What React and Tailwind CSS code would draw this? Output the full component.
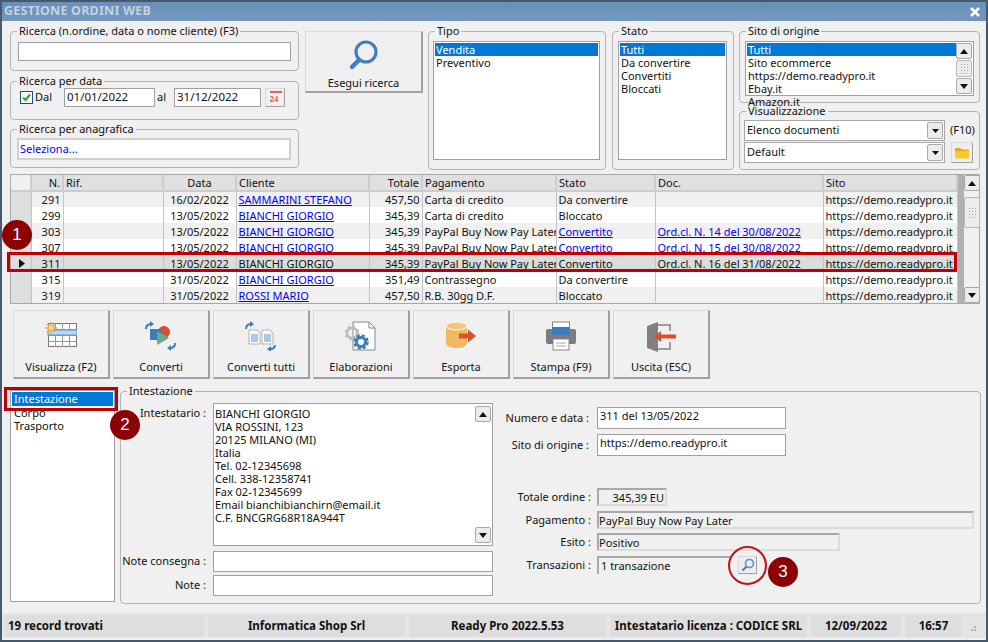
const rows = [
  ['291', '16/02/2022', 'SAMMARINI STEFANO', '457,50', 'Carta di credito', 'Da convertire', false, '', 'bg-[#f0f0f0]'],
  ['299', '13/05/2022', 'BIANCHI GIORGIO', '345,39', 'Carta di credito', 'Bloccato', false, '', 'bg-white'],
  ['303', '13/05/2022', 'BIANCHI GIORGIO', '345,39', 'PayPal Buy Now Pay Later', 'Convertito', true, 'Ord.cl. N. 14 del 30/08/2022', 'bg-[#f0f0f0]'],
  ['307', '13/05/2022', 'BIANCHI GIORGIO', '345,39', 'PayPal Buy Now Pay Later', 'Convertito', true, 'Ord.cl. N. 15 del 30/08/2022', 'bg-white'],
  ['311', '13/05/2022', 'BIANCHI GIORGIO', '345,39', 'PayPal Buy Now Pay Later', 'Convertito', true, 'Ord.cl. N. 16 del 31/08/2022', 'bg-[#dcdcdc]'],
  ['315', '31/05/2022', 'BIANCHI GIORGIO', '351,49', 'Contrassegno', 'Da convertire', false, '', 'bg-white'],
  ['319', '31/05/2022', 'ROSSI MARIO', '457,50', 'R.B. 30gg D.F.', 'Bloccato', false, '', 'bg-[#f0f0f0]'],
];

function Box({ title, className, children }) {
  return (
    <fieldset className={`border border-[#b4b4b4] rounded-[4px] min-w-0 ${className}`}>
      <legend className="ml-[6px] px-[2px] h-[14px] leading-[14px]">{title}</legend>
      {children}
    </fieldset>
  );
}

function Arrow({ down }) {
  return (
    <div className="w-[16px] h-[16px] shrink-0 flex items-center justify-center bg-[#ececec] border border-[#a8a8a8] rounded-[2px]">
      <svg width="8" height="5" viewBox="0 0 8 5">
        <path d={down ? 'M0 0H8L4 5Z' : 'M0 5H8L4 0Z'} fill="#111" />
      </svg>
    </div>
  );
}

function Thumb({ className }) {
  return (
    <div className={`w-[16px] shrink-0 flex items-center justify-center bg-[#ececec] border border-[#b8b8b8] rounded-[2px] ${className}`}>
      <div className="grid grid-cols-3 gap-[2px]">
        {Array.from({ length: 12 }).map((_, i) => (
          <div key={i} className="w-[1px] h-[1px] bg-[#a8a8a8]" />
        ))}
      </div>
    </div>
  );
}

function Inset({ className, children }) {
  return (
    <div className={`h-[18px] leading-[16px] pl-[2px] bg-[#f0f0f0] border-2 border-[#dcdcdc] border-t-[#a8a8a8] border-l-[#a8a8a8] ${className}`}>
      {children}
    </div>
  );
}

function Select({ text, w }) {
  return (
    <div className={`h-[21px] bg-white border border-[#a8a8a8] flex items-center justify-between pl-[2px] pr-[1px] ${w}`}>
      <span>{text}</span>
      <div className="w-[16px] h-[17px] bg-[#ececec] border border-[#a8a8a8] rounded-[2px] flex items-center justify-center">
        <svg width="7" height="4" viewBox="0 0 7 4"><path d="M0 0H7L3.5 4Z" fill="#111" /></svg>
      </div>
    </div>
  );
}

function ToolBtn({ label, children }) {
  return (
    <div className="w-[97px] h-[69px] flex flex-col items-center bg-[#f0f0f0] border border-[#dadada] border-r-2 border-b-2 border-r-[#a0a0a0] border-b-[#a0a0a0]">
      <div className="h-[43px] pt-[10px] flex items-start justify-center">{children}</div>
      <div className="mt-[6px] leading-[14px]">{label}</div>
    </div>
  );
}

function Badge({ n, className }) {
  return (
    <div className={`absolute w-[30px] h-[30px] rounded-full bg-[#8b0000] text-white flex items-center justify-center text-[17px] font-['Liberation_Sans',sans-serif] ${className}`}>
      {n}
    </div>
  );
}

function Status({ w, left, children }) {
  return (
    <div className={`h-[24px] bg-[#dedede] border border-[#e8e8e8] font-bold text-[11.5px] flex items-center ${left ? 'pl-[3px]' : 'justify-center'} ${w}`}>
      {children}
    </div>
  );
}

const IconTable = () => (
  <svg width="32" height="28" viewBox="0 0 32 28">
    <rect x="3.5" y="2.5" width="28" height="23" fill="#fff" stroke="#777" />
    <path d="M3 8.5H32M3 14.5H32M3 20.5H32M10.5 2V26M17.5 2V26M24.5 2V26" stroke="#999" />
    <rect x="3" y="9" width="29" height="5" fill="#bcd6ec" stroke="#5a9ad0" />
    <g stroke="#f0a94a" strokeWidth="1.4">
      <path d="M6 1V13M0 7H12M2 3L10 11M10 3L2 11" />
    </g>
    <circle cx="6" cy="7" r="3" fill="#f8d8a0" stroke="#eea040" />
  </svg>
);

const Curl = ({ d }) => <path d={d} fill="none" stroke="#3c7dbd" strokeWidth="2" />;

const IconConverti = () => (
  <svg width="34" height="30" viewBox="0 0 34 30">
    <Curl d="M2 8C2 4 4 3 7 3" />
    <path d="M6 0L10 3L6 6Z" fill="#3c7dbd" />
    <circle cx="20" cy="11" r="6" fill="#d94f2b" />
    <rect x="6" y="8" width="11" height="11" fill="#3c7dbd" />
    <path d="M13 10L25 17L13 24Z" fill="#5fae8a" />
    <Curl d="M31 22C31 26 29 27 26 27" />
    <path d="M27 24L23 27L27 30Z" fill="#3c7dbd" />
  </svg>
);

const Doc = ({ x }) => (
  <g>
    <path d={`M${x} 9H${x + 8}L${x + 11} 12V23H${x}Z`} fill="#fff" stroke="#b0b0b0" />
    <rect x={x + 2} y="13" width="7" height="8" fill="#a8cbe8" />
  </g>
);

const IconTutti = () => (
  <svg width="34" height="30" viewBox="0 0 34 30">
    <Curl d="M2 8C2 4 4 3 7 3" />
    <path d="M6 0L10 3L6 6Z" fill="#3c7dbd" />
    <Doc x={5} />
    <Doc x={18} />
    <Curl d="M31 24C31 27 29 28 26 28" />
    <path d="M27 25L23 28L27 31Z" fill="#3c7dbd" />
  </svg>
);

const IconElab = () => (
  <svg width="32" height="30" viewBox="0 0 32 30">
    <path d="M8 1H24L30 7V29H8Z" fill="#fff" stroke="#888" />
    <path d="M24 1V7H30" fill="none" stroke="#888" />
    <circle cx="7" cy="12" r="5" fill="none" stroke="#bbb" strokeWidth="2.5" />
    <circle cx="7" cy="12" r="6.5" fill="none" stroke="#bbb" strokeWidth="2" strokeDasharray="2.5 2.6" />
    <circle cx="16" cy="21" r="4.5" fill="none" stroke="#3c7dbd" strokeWidth="3" />
    <circle cx="16" cy="21" r="6.5" fill="none" stroke="#3c7dbd" strokeWidth="2.5" strokeDasharray="3 2.1" />
  </svg>
);

const IconEsporta = () => (
  <svg width="32" height="28" viewBox="0 0 32 28">
    <path d="M1 5V22C1 25 6 27 11.5 27S22 25 22 22V5Z" fill="#f0b860" />
    <ellipse cx="11.5" cy="5" rx="10.5" ry="4" fill="#f4c67e" stroke="#fff" />
    <path d="M14 12.5H23V8.5L31 15L23 21.5V17.5H14Z" fill="#d9502e" />
  </svg>
);

const IconStampa = () => (
  <svg width="32" height="30" viewBox="0 0 32 30">
    <rect x="7.5" y="1" width="17" height="7" fill="#fff" stroke="#888" />
    <rect x="1" y="8" width="30" height="15" rx="2" fill="#7d7d7d" />
    <rect x="7" y="6" width="18" height="8" fill="#3c7dbd" />
    <rect x="8" y="18" width="16" height="11" fill="#fff" stroke="#888" />
    <path d="M11 22H21M11 25H21" stroke="#aaa" />
  </svg>
);

const IconUscita = () => (
  <svg width="30" height="32" viewBox="0 0 30 32">
    <path d="M1 5L12 1V31L1 27Z" fill="#808080" />
    <path d="M12 4H24V10M24 21V28H12" fill="none" stroke="#808080" strokeWidth="1.5" />
    <path d="M29 13.5H14V10L7 15.5L14 21V17.5H29Z" fill="#d9502e" transform="translate(1 0)" />
  </svg>
);

export default function App() {
  return (
    <div className="relative w-[988px] h-[642px] overflow-hidden bg-[#f0f0f0] border-2 border-t-0 border-[#47596d] text-[11px] text-[#111] font-['Noto_Sans','Open_Sans',sans-serif] flex flex-col">
      {/* Title */}
      <div className="h-[21px] shrink-0 border-t-2 border-[#47596d] bg-gradient-to-b from-[#6b90b8] to-[#7398bf] flex items-center justify-between pl-[2px] pr-[6px]">
        <span className="font-bold text-[12.5px] text-[#c3d2e2] tracking-[0.2px]">GESTIONE ORDINI WEB</span>
        <svg width="10" height="10" viewBox="0 0 10 10"><path d="M1 1L9 9M9 1L1 9" stroke="#fff" strokeWidth="2.6" /></svg>
      </div>

      {/* Filters */}
      <div className="flex h-[146px] shrink-0 mt-[3px] pl-[8px]">
        <div className="w-[289px] flex flex-col">
          <Box title="Ricerca (n.ordine, data o nome cliente) (F3)" className="h-[47px]">
            <div className="h-[19px] mt-[4px] ml-[7px] w-[273px] bg-white border border-[#a0a0a0]" />
          </Box>
          <Box title="Ricerca per data" className="h-[46px] mt-[3px]">
            <div className="flex items-center h-[20px] mt-[-1px] ml-[9px]">
              <div className="w-[13px] h-[13px] border border-[#1f4f7f] bg-white flex items-center justify-center">
                <svg width="9" height="9" viewBox="0 0 9 9"><path d="M1 4.5L3.5 7L8 1.5" fill="none" stroke="#2f9e2f" strokeWidth="2" /></svg>
              </div>
              <span className="ml-[2px] w-[29px]">Dal</span>
              <div className="w-[91px] h-[19px] bg-white border border-[#a0a0a0] pl-[2px] leading-[16px] text-[11.5px]">01/01/2022</div>
              <span className="w-[19px] pl-[2px]">al</span>
              <div className="w-[87px] h-[19px] bg-white border border-[#a0a0a0] pl-[2px] leading-[16px] text-[11.5px]">31/12/2022</div>
              <div className="ml-[4px] w-[20px] h-[19px] bg-[#eeeeee] border border-[#dadada] border-r-[#a0a0a0] border-b-[#a0a0a0] flex items-center justify-center">
                <svg width="16" height="14" viewBox="0 0 16 14">
                  <rect x="1" y="1" width="14" height="12" fill="#fdf4f2" />
                  <path d="M3 1H15V3H3Z" fill="#d9675a" />
                  <text x="2.5" y="12" fontSize="8" fontWeight="700" fill="#e07060">24</text>
                </svg>
              </div>
            </div>
          </Box>
          <Box title="Ricerca per anagrafica" className="h-[46px] mt-[2px]">
            <div className="h-[22px] mt-[2px] ml-[6px] w-[274px] bg-white border-2 border-[#d0d0d0] pl-[1px] leading-[17px] text-[#0000ff]">Seleziona...</div>
          </Box>
        </div>

        <div className="ml-[6px] mt-[7px] w-[118px] h-[62px] flex flex-col items-center bg-[#f0f0f0] border border-[#dadada] border-b-2 border-r-2 border-b-[#a0a0a0] border-r-[#a0a0a0]">
          <svg className="mt-[7px]" width="32" height="32" viewBox="0 0 32 32">
            <circle cx="18" cy="13" r="10" fill="none" stroke="#3f7fbf" strokeWidth="3.2" />
            <path d="M11 21L4 28" stroke="#3f7fbf" strokeWidth="4.5" strokeLinecap="round" />
          </svg>
          <span className="mt-[5px] leading-[14px]">Esegui ricerca</span>
        </div>

        <Box title="Tipo" className="ml-[5px] w-[178px] h-[146px]">
          <div className="mt-[3px] ml-[4px] w-[167px] h-[119px] bg-white border border-[#a0a0a0] p-[1px] leading-[13px]">
            <div className="bg-[#0078d7] text-white h-[13px] pl-[1px]">Vendita</div>
            <div className="pl-[1px]">Preventivo</div>
          </div>
        </Box>

        <Box title="Stato" className="ml-[6px] w-[122px] h-[146px]">
          <div className="mt-[3px] ml-[5px] w-[109px] h-[119px] bg-white border border-[#a0a0a0] p-[1px] leading-[13px]">
            <div className="bg-[#0078d7] text-white h-[13px] pl-[1px]">Tutti</div>
            <div className="pl-[1px]">Da convertire</div>
            <div className="pl-[1px]">Convertiti</div>
            <div className="pl-[1px]">Bloccati</div>
          </div>
        </Box>

        <div className="ml-[5px] w-[241px] flex flex-col">
          <Box title="Sito di origine" className="h-[79px]">
            <div className="mt-[3px] ml-[5px] w-[229px] h-[55px] bg-white border border-[#a0a0a0] flex leading-[13px] p-[1px]">
              <div className="flex-1 min-w-0">
                <div className="bg-[#0078d7] text-white h-[13px] pl-[1px]">Tutti</div>
                <div className="pl-[1px]">Sito ecommerce https://demo.readypro.it</div>
                <div className="pl-[1px]">Ebay.it</div>
                <div className="pl-[1px]">Amazon.it</div>
              </div>
              <div className="flex flex-col justify-between h-[51px] mr-0">
                <Arrow />
                <Thumb className="h-[17px]" />
                <Arrow down />
              </div>
            </div>
          </Box>
          <Box title="Visualizzazione" className="h-[66px] mt-[1px]">
            <div className="flex items-center mt-[2px] ml-[4px]">
              <Select text="Elenco documenti" w="w-[201px]" />
              <span className="ml-[5px]">(F10)</span>
            </div>
            <div className="flex items-center mt-[1px] ml-[4px]">
              <Select text="Default" w="w-[201px]" />
              <div className="ml-[6px] w-[22px] h-[21px] bg-[#eeeeee] border border-[#dadada] border-r-[#a0a0a0] border-b-[#a0a0a0] flex items-center justify-center">
                <svg width="16" height="13" viewBox="0 0 16 13">
                  <path d="M1 2H6L8 3.5H15V11.5H1Z" fill="#e9a818" />
                  <path d="M1 5H15V11.5Q15 12.5 14 12.5H2Q1 12.5 1 11.5Z" fill="#fbc92d" />
                </svg>
              </div>
            </div>
          </Box>
        </div>
      </div>

      {/* Grid */}
      <div className="flex h-[130px] w-[970px] shrink-0 ml-[8px] mt-[4px] border border-[#a8a8a8]">
        <table className="table-fixed border-collapse w-[946px] h-[128px] leading-[15px]">
          <colgroup>
            <col className="w-[20px]" /><col className="w-[32px]" /><col className="w-[100px]" /><col className="w-[73px]" />
            <col className="w-[133px]" /><col className="w-[53px]" /><col className="w-[134px]" /><col className="w-[99px]" />
            <col className="w-[168px]" /><col className="w-[134px]" />
          </colgroup>
          <thead>
            <tr className="h-[16px] bg-[#e0e0e0] [&>th]:font-normal [&>th]:border-r-2 [&>th]:border-b-2 [&>th]:border-[#cdcdcd] [&>th]:px-[2px] [&>th]:overflow-hidden [&>th]:whitespace-nowrap">
              <th className="bg-[#f0f0f0]" />
              <th className="text-right">N.</th>
              <th className="text-left">Rif.</th>
              <th className="text-center">Data</th>
              <th className="text-left">Cliente</th>
              <th className="text-right">Totale</th>
              <th className="text-left">Pagamento</th>
              <th className="text-left">Stato</th>
              <th className="text-left">Doc.</th>
              <th className="text-left">Sito</th>
            </tr>
          </thead>
          <tbody>
            {rows.map((r) => {
              const sel = r[0] === '311';
              const link = sel ? 'underline text-[#111]' : 'underline text-[#0000ff]';
              return (
                <tr key={r[0]} className={`h-[16px] ${r[8]} [&>td]:border-r [&>td]:border-[#c4c4c4] [&>td]:px-[2px] [&>td]:p-y-0 [&>td]:overflow-hidden [&>td]:whitespace-nowrap`}>
                  <td className="bg-[#dedede]">
                    {sel && (
                      <svg className="ml-[6px]" width="6" height="9" viewBox="0 0 6 9"><path d="M0 0L6 4.5L0 9Z" fill="#111" /></svg>
                    )}
                  </td>
                  <td className="text-right">{r[0]}</td>
                  <td />
                  <td className="text-center">{r[1]}</td>
                  <td><span className={link}>{r[2]}</span></td>
                  <td className="text-right">{r[3]}</td>
                  <td>{r[4]}</td>
                  <td>{r[6] ? <span className={link}>{r[5]}</span> : r[5]}</td>
                  <td>{r[7] && <span className={link}>{r[7]}</span>}</td>
                  <td>https://demo.readypro.it</td>
                </tr>
              );
            })}
          </tbody>
        </table>
        <div className="w-[6px] bg-[#b0b0b0] shrink-0" />
        <div className="flex-1 flex flex-col items-center">
          <Arrow />
          <Thumb className="h-[31px] mt-[6px]" />
          <div className="flex-1" />
          <Arrow down />
        </div>
      </div>

      {/* Toolbar */}
      <div className="flex gap-[3px] ml-[11px] mt-[6px] shrink-0">
        <ToolBtn label="Visualizza (F2)"><IconTable /></ToolBtn>
        <ToolBtn label="Converti"><IconConverti /></ToolBtn>
        <ToolBtn label="Converti tutti"><IconTutti /></ToolBtn>
        <ToolBtn label="Elaborazioni"><IconElab /></ToolBtn>
        <ToolBtn label="Esporta"><IconEsporta /></ToolBtn>
        <ToolBtn label="Stampa (F9)"><IconStampa /></ToolBtn>
        <ToolBtn label="Uscita (ESC)"><IconUscita /></ToolBtn>
      </div>

      {/* Detail */}
      <div className="flex mt-[5px] ml-[8px] shrink-0 h-[220px]">
        <div className="mt-[6px] w-[105px] h-[212px] bg-white border border-[#a0a0a0] p-[1px] leading-[13px]">
          <div className="h-[14px] bg-[#0078d7] text-white pl-[2px] leading-[14px]">Intestazione</div>
          <div className="pl-[2px]">Corpo</div>
          <div className="pl-[2px]">Trasporto</div>
        </div>
        <Box title="Intestazione" className="ml-[5px] w-[861px] h-[220px]">
          <div className="flex">
            <div className="w-[372px] mt-[5px]">
              <div className="flex">
                <div className="w-[85px] text-right pt-[3px] leading-[14px]">Intestatario :</div>
                <div className="ml-[7px] w-[280px] h-[143px] bg-white border border-[#a0a0a0] flex pl-[1px] pt-[3px] leading-[13px]">
                  <div className="flex-1 whitespace-pre-line">
                    {'BIANCHI GIORGIO\nVIA ROSSINI, 123\n20125 MILANO (MI)\nItalia\nTel. 02-12345698\nCell. 338-12358741\nFax 02-12345699\nEmail bianchibianchirn@email.it\nC.F. BNCGRG68R18A944T'}
                  </div>
                  <div className="flex flex-col justify-between h-[137px] mt-[-1px] mr-[1px]">
                    <Arrow />
                    <Arrow down />
                  </div>
                </div>
              </div>
              <div className="flex items-center mt-[5px]">
                <div className="w-[85px] text-right whitespace-nowrap">Note consegna :</div>
                <div className="ml-[7px] w-[280px] h-[21px] bg-white border border-[#a0a0a0]" />
              </div>
              <div className="flex items-center mt-[3px]">
                <div className="w-[85px] text-right">Note :</div>
                <div className="ml-[7px] w-[280px] h-[21px] bg-white border border-[#a0a0a0]" />
              </div>
            </div>

            <div className="mt-[9px]">
              <div className="flex items-center">
                <div className="w-[96px] text-right">Numero e data :</div>
                <div className="ml-[8px] w-[189px] h-[22px] bg-white border border-[#a0a0a0] pl-[2px] leading-[16px]">311 del 13/05/2022</div>
              </div>
              <div className="flex items-center mt-[5px]">
                <div className="w-[96px] text-right">Sito di origine :</div>
                <div className="ml-[8px] w-[189px] h-[22px] bg-white border border-[#a0a0a0] pl-[2px] leading-[16px]">https://demo.readypro.it</div>
              </div>
              <div className="flex items-center mt-[32px]">
                <div className="w-[98px] text-right">Totale ordine :</div>
                <Inset className="ml-[6px] w-[70px] text-right !pl-0 pr-[1px]">345,39 EU</Inset>
              </div>
              <div className="flex items-center mt-[5px]">
                <div className="w-[98px] text-right">Pagamento :</div>
                <Inset className="ml-[6px] w-[377px] !pl-0">PayPal Buy Now Pay Later</Inset>
              </div>
              <div className="flex items-center mt-[4px]">
                <div className="w-[98px] text-right">Esito :</div>
                <Inset className="ml-[6px] w-[243px] !pl-0">Positivo</Inset>
              </div>
              <div className="flex items-center mt-[5px]">
                <div className="w-[98px] text-right">Transazioni :</div>
                <Inset className="ml-[6px] w-[133px] border-r-0 border-b-0">1 transazione</Inset>
                <div className="ml-[8px] w-[19px] h-[18px] bg-[#eeeeee] border border-[#dadada] border-r-[#a0a0a0] border-b-[#a0a0a0] flex items-center justify-center">
                  <svg width="14" height="14" viewBox="0 0 14 14">
                    <circle cx="8.5" cy="5.5" r="4" fill="none" stroke="#5b93c9" strokeWidth="1.6" />
                    <path d="M5.5 8.5L1.5 12.5" stroke="#3f7fbf" strokeWidth="2.2" />
                  </svg>
                </div>
              </div>
            </div>
          </div>
        </Box>
      </div>

      {/* Status */}
      <div className="flex items-center h-[25px] mt-[9px] shrink-0 bg-[#e4e4e4] pl-[2px] gap-[2px]">
        <Status w="w-[201px]" left>19 record trovati</Status>
        <Status w="w-[199px]">Informatica Shop Srl</Status>
        <Status w="w-[199px]">Ready Pro 2022.5.53</Status>
        <Status w="w-[199px]">Intestatario licenza : CODICE SRL</Status>
        <Status w="w-[92px]">12/09/2022</Status>
        <Status w="w-[59px]">16:57</Status>
        <div className="ml-[6px] mt-[6px] grid grid-cols-2 gap-[1px]">
          <div className="w-[2px] h-[2px]" />
          <div className="w-[2px] h-[2px] bg-[#b0b0b0]" />
          <div className="w-[2px] h-[2px] bg-[#b0b0b0]" />
          <div className="w-[2px] h-[2px] bg-[#b0b0b0]" />
        </div>
      </div>

      {/* Callouts */}
      <div className="absolute left-[5px] top-[252px] w-[950px] h-[20px] border-[3px] border-[#c00000]" />
      <div className="absolute left-[2px] top-[387px] w-[114px] h-[24px] border-[3px] border-[#c00000]" />
      <div className="absolute left-[726px] top-[546px] w-[39px] h-[39px] rounded-full border-2 border-[#c81010]" />
      <Badge n="1" className="left-0 top-[220px]" />
      <Badge n="2" className="left-[108px] top-[410px]" />
      <Badge n="3" className="left-[766px] top-[557px]" />
    </div>
  );
}
